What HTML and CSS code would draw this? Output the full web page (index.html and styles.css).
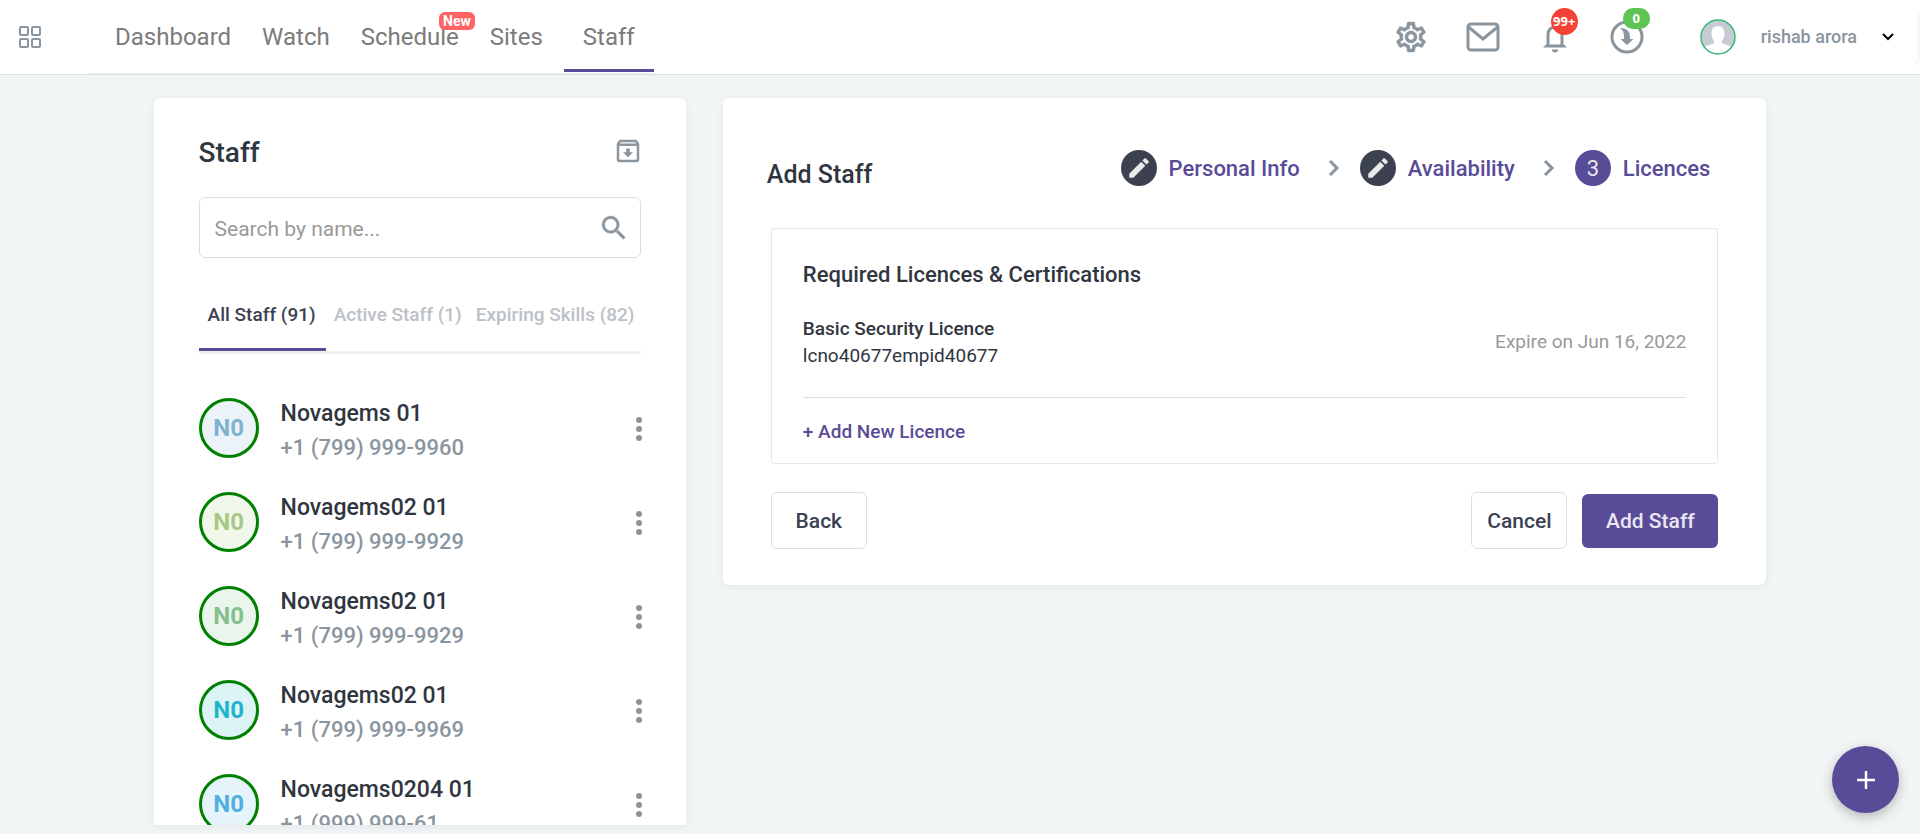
FILE: index.html
```html
<!DOCTYPE html>
<html lang="en">
<head>
<meta charset="utf-8">
<title>Staff</title>
<link rel="stylesheet" href="styles.css">
</head>
<body>
<header class="topbar">
  <button class="icon-btn apps" aria-label="Apps"><svg width="22" height="22" viewBox="0 0 22 22" fill="none" stroke="#8a959e" stroke-width="2"><rect x="1" y="1" width="8" height="8" rx="1"/><rect x="13" y="1" width="8" height="8" rx="1"/><rect x="1" y="13" width="8" height="8" rx="1"/><rect x="13" y="13" width="8" height="8" rx="1"/></svg></button>
  <nav class="nav">
    <a href="#">Dashboard</a>
    <a href="#">Watch</a>
    <a href="#">Schedule<span class="new">New</span></a>
    <a href="#">Sites</a>
    <a href="#" class="current">Staff</a>
  </nav>
  <div class="tools">
    <button class="icon-btn" aria-label="Settings"><svg width="36" height="36" viewBox="0 0 24 24" fill="#8a959e" stroke="#8a959e" stroke-width=".3"><path d="M19.43 12.98c.04-.32.07-.64.07-.98s-.03-.66-.07-.98l2.11-1.65c.19-.15.24-.42.12-.64l-2-3.46c-.09-.16-.26-.25-.44-.25-.06 0-.12.01-.17.03l-2.49 1c-.52-.4-1.08-.73-1.69-.98l-.38-2.65C14.46 2.18 14.25 2 14 2h-4c-.25 0-.46.18-.49.42l-.38 2.65c-.61.25-1.17.59-1.69.98l-2.49-1c-.06-.02-.12-.03-.18-.03-.17 0-.34.09-.43.25l-2 3.46c-.13.22-.07.49.12.64l2.11 1.65c-.04.32-.07.65-.07.98s.03.66.07.98l-2.11 1.65c-.19.15-.24.42-.12.64l2 3.46c.09.16.26.25.44.25.06 0 .12-.01.17-.03l2.49-1c.52.4 1.08.73 1.69.98l.38 2.65c.03.24.24.42.49.42h4c.25 0 .46-.18.49-.42l.38-2.65c.61-.25 1.17-.59 1.69-.98l2.49 1c.06.02.12.03.18.03.17 0 .34-.09.43-.25l2-3.46c.12-.22.07-.49-.12-.64l-2.11-1.65zm-1.98-1.71c.04.31.05.52.05.73s-.02.43-.05.73l-.14 1.13.89.7 1.08.84-.7 1.21-1.27-.51-1.04-.42-.9.68c-.43.32-.84.56-1.25.73l-1.06.43-.16 1.13-.2 1.35h-1.4l-.19-1.35-.16-1.13-1.06-.43c-.43-.18-.83-.41-1.23-.71l-.91-.7-1.06.43-1.27.51-.7-1.21 1.08-.84.89-.7-.14-1.13c-.03-.31-.05-.54-.05-.74s.02-.43.05-.73l.14-1.13-.89-.7-1.08-.84.7-1.21 1.27.51 1.04.42.9-.68c.43-.32.84-.56 1.25-.73l1.06-.43.16-1.13.2-1.35h1.39l.19 1.35.16 1.13 1.06.43c.43.18.83.41 1.23.71l.91.7 1.06-.43 1.27-.51.7 1.21-1.07.85-.89.7.14 1.13zM12 8c-2.21 0-4 1.79-4 4s1.79 4 4 4 4-1.79 4-4-1.79-4-4-4zm0 6c-1.1 0-2-.9-2-2s.9-2 2-2 2 .9 2 2-.9 2-2 2z"/></svg></button>
    <button class="icon-btn" aria-label="Messages"><svg width="36" height="36" viewBox="0 0 36 36" fill="none" stroke="#8a959e" stroke-width="3"><rect x="3" y="5" width="30" height="26" rx="3"/><path d="M3.500 8 18 20 32.500 8"/></svg></button>
    <button class="icon-btn" aria-label="Notifications"><svg width="36" height="36" viewBox="0 0 36 36"><path d="M11 27V15a7 7 0 0 1 14 0v12" fill="none" stroke="#8a959e" stroke-width="3"/><path d="M6 28.500l3-3h18l3 3zM15 30.500h6a3 3 0 0 1-6 0z" fill="#8a959e"/></svg><span class="badge red">99+</span></button>
    <button class="icon-btn" aria-label="Downloads"><svg width="36" height="36" viewBox="0 0 36 36"><circle cx="18" cy="18" r="15" fill="none" stroke="#8a959e" stroke-width="3"/><path d="M11 9c6 0 10 3 10 9v2h3.500L18 26l-6.500-6H15v-2c0-4-1-7-4-9z" fill="#8a959e"/></svg><span class="badge green">0</span></button>
  </div>
  <button class="user"><svg width="36" height="36" viewBox="0 0 36 36"><circle cx="18" cy="18" r="17" fill="#c6cad2"/><path d="M18 7c-4 0-6.500 3-6.500 7 0 3 1 6 2.500 8v2c-3 2-7 2-9.500 4a17 17 0 0 0 27 0c-2.500-2-6.500-2-9.500-4v-2c1.500-2 2.500-5 2.500-8 0-4-2.500-7-6.500-7z" fill="#fff"/><circle cx="18" cy="18" r="17" fill="none" stroke="#3cb878" stroke-width="1.500"/></svg><span>rishab arora</span><svg width="12" height="8" viewBox="0 0 12 8" fill="none" stroke="#000" stroke-width="2"><path d="M1 1l5 5 5-5"/></svg></button>
</header>
<main class="page">
  <section class="card staff">
    <div class="staff-head"><h1>Staff</h1><button class="icon-btn archive" aria-label="Archive"><svg width="30" height="30" viewBox="0 0 24 24" fill="#8a959e"><path d="M20.540 5.230l-1.390-1.680C18.880 3.210 18.470 3 18 3H6c-.47 0-.88.21-1.160.55L3.460 5.230C3.170 5.570 3 6.020 3 6.500V19c0 1.100.9 2 2 2h14c1.100 0 2-.9 2-2V6.500c0-.48-.17-.93-.46-1.270zM6.240 5h11.520l.83 1H5.420l.82-1zM5 19V8h14v11H5zm8.450-9h-2.900v3H8l4 4 4-4h-2.550z"/></svg></button></div>
    <div class="search"><input type="text" placeholder="Search by name..." aria-label="Search by name"><svg width="32" height="32" viewBox="0 0 24 24" fill="#8a959e" stroke="#8a959e" stroke-width=".3"><path d="M15.500 14h-.79l-.28-.27A6.470 6.470 0 0 0 16 9.500 6.500 6.500 0 1 0 9.500 16c1.610 0 3.090-.59 4.230-1.570l.27.28v.79l5 4.990L20.490 19l-4.990-5zm-6 0C7.010 14 5 11.990 5 9.500S7.010 5 9.500 5 14 7.010 14 9.500 11.990 14 9.500 14z"/></svg></div>
    <div class="tabs"><button class="tab on">All Staff (91)</button><button class="tab">Active Staff (1)</button><button class="tab">Expiring Skills (82)</button></div>
    <ul class="list">
      <li><span class="avatar a1">N0</span><div class="who"><strong>Novagems 01</strong><span>+1 (799) 999-9960</span></div><button class="more" aria-label="More"><i></i><i></i><i></i></button></li>
      <li><span class="avatar a2">N0</span><div class="who"><strong>Novagems02 01</strong><span>+1 (799) 999-9929</span></div><button class="more" aria-label="More"><i></i><i></i><i></i></button></li>
      <li><span class="avatar a3">N0</span><div class="who"><strong>Novagems02 01</strong><span>+1 (799) 999-9929</span></div><button class="more" aria-label="More"><i></i><i></i><i></i></button></li>
      <li><span class="avatar a4">N0</span><div class="who"><strong>Novagems02 01</strong><span>+1 (799) 999-9969</span></div><button class="more" aria-label="More"><i></i><i></i><i></i></button></li>
      <li><span class="avatar a5">N0</span><div class="who"><strong>Novagems0204 01</strong><span>+1 (999) 999-61</span></div><button class="more" aria-label="More"><i></i><i></i><i></i></button></li>
    </ul>
  </section>
  <section class="card add">
    <div class="add-head">
      <h2>Add Staff</h2>
      <ol class="steps">
        <li><span class="dot"><svg width="26" height="26" viewBox="0 0 24 24" fill="#e9e9ea"><path d="M3 17.250V21h3.750L17.810 9.940l-3.750-3.750L3 17.250zM20.710 7.040a1 1 0 0 0 0-1.410l-2.340-2.340a1 1 0 0 0-1.410 0l-1.830 1.830 3.750 3.750 1.830-1.830z"/></svg></span>Personal Info</li>
        <li class="sep"><svg width="12" height="18" viewBox="0 0 12 18" fill="none" stroke="#8a959e" stroke-width="3"><path d="M2 2l7 7-7 7"/></svg></li>
        <li><span class="dot"><svg width="26" height="26" viewBox="0 0 24 24" fill="#e9e9ea"><path d="M3 17.250V21h3.750L17.810 9.940l-3.750-3.750L3 17.250zM20.710 7.040a1 1 0 0 0 0-1.410l-2.340-2.340a1 1 0 0 0-1.410 0l-1.830 1.830 3.750 3.750 1.830-1.830z"/></svg></span>Availability</li>
        <li class="sep"><svg width="12" height="18" viewBox="0 0 12 18" fill="none" stroke="#8a959e" stroke-width="3"><path d="M2 2l7 7-7 7"/></svg></li>
        <li><span class="dot now">3</span>Licences</li>
      </ol>
    </div>
    <div class="box">
      <h3>Required Licences &amp; Certifications</h3>
      <div class="licence"><div><strong>Basic Security Licence</strong><span>lcno40677empid40677</span></div><time datetime="2022-06-16">Expire on Jun 16, 2022</time></div>
      <button class="link">+ Add New Licence</button>
    </div>
    <div class="actions"><button class="btn">Back</button><button class="btn cancel">Cancel</button><button class="btn primary">Add Staff</button></div>
  </section>
</main>
<button class="fab" aria-label="Add"><svg width="20" height="20" viewBox="0 0 20 20" stroke="#fff" stroke-width="2.500"><path d="M10 1v18M1 10h18"/></svg></button>
</body>
</html>
```
FILE: styles.css
```css
* { box-sizing: border-box; }
body { margin: 0; height: 100vh; overflow: hidden; display: flex; flex-direction: column; background: #f1f5f6; color: #2f3640; font-family: Roboto, "Liberation Sans", sans-serif; font-size: 19px; }
button { font: inherit; color: inherit; background: none; border: 0; padding: 0; margin: 0; cursor: pointer; }
svg { display: block; }
h1, h2, h3, ul, ol { margin: 0; padding: 0; font-weight: 500; list-style: none; }
.topbar { flex: none; height: 75px; display: flex; align-items: stretch; background: #fff; border-bottom: 1px solid #e0e0e0; padding-left: 19px; }
.icon-btn { position: relative; }
.nav { display: flex; margin-left: 45px; padding-left: 14px; border-bottom: 1px solid #f1f1f1; font-size: 24px; color: #7b7b7b; }
.nav a { position: relative; display: flex; align-items: center; padding: 1px 16px 0 15px; color: inherit; text-decoration: none; }
.nav a.current { margin-left: 5px; padding: 5px 19px 0; border-bottom: 3px solid #5a4b98; margin-bottom: 1px; }
.new { position: absolute; top: 12px; right: 0; height: 18px; padding: 0 4px; border-radius: 6px; background: #ff6363; color: #fff; font-size: 14px; font-weight: 700; line-height: 18px; }
.tools { display: flex; gap: 36px; margin-left: auto; }
.tools .icon-btn { width: 36px; }
.badge { position: absolute; top: 8px; left: 14px; width: 27px; color: #fff; font: 700 13px/27px "Open Sans", sans-serif; text-align: center; }
.red { height: 27px; border-radius: 50%; background: #f44336; }
.green { height: 21px; border-radius: 10px; background: #5fc453; line-height: 21px; }
.user { display: flex; align-items: center; gap: 25px; margin: 9px 3px 9px 55px; padding-right: 23px; border-radius: 6px; box-shadow: 3px 0 0 #f8f8f8; color: #8a959e; font-size: 18px; font-weight: 500; }
.user span { padding-bottom: 2px; }
.page { flex: 1; min-height: 0; display: flex; align-items: flex-start; gap: 37px; padding: 23px 8% 9px; }
.card { background: #fff; border-radius: 6px; box-shadow: 0 2px 8px rgba(0, 0, 0, .06); }
.staff { width: 33%; height: 100%; overflow: hidden; padding: 36px 45px 0; border-radius: 6px 6px 0 0; }
.staff-head { display: flex; justify-content: space-between; align-items: center; height: 36px; }
.archive { margin-right: -2px; padding-bottom: 2px; }
h1 { font-size: 28px; }
.search { display: flex; align-items: center; height: 61px; margin-top: 27px; padding: 0 10px 0 15px; border: 1px solid #dedede; border-radius: 6px; }
.search input { flex: 1; min-width: 0; border: 0; outline: 0; padding: 3px 0 0; font: 21px Roboto, sans-serif; }
.search input::placeholder { color: #999; opacity: 1; }
.tabs { display: flex; margin-top: 25px; height: 71px; border-bottom: 3px solid #f1f1f1; font-weight: 500; white-space: nowrap; }
.tab { color: #bcc1c7; padding: 0 6px 6px 8px; }
.tab.on { color: #3c4152; padding: 3px 10px 6px 9px; border-bottom: 3px solid #5a4b98; }
.list { padding-top: 44px; }
.list li { display: flex; align-items: center; height: 60px; margin-bottom: 34px; }
.avatar { flex: none; display: grid; place-items: center; width: 60px; height: 60px; border: 3px solid #008000; border-radius: 50%; font-size: 24px; font-weight: 700; }
.a1 { background: #ebf3f8; color: #7fb2d0; }
.a2 { background: #f2f7ec; color: #a8c984; }
.a3 { background: #eaf5ec; color: #82c08c; }
.a4 { background: #dcf4f6; color: #1fb6cb; }
.a5 { background: #e5f3fb; color: #50aee0; }
.who { flex: 1; display: flex; flex-direction: column; margin-left: 22px; padding-top: 5px; line-height: 34px; font-size: 22px; color: #8a959e; }
.who strong { font-size: 23px; font-weight: 500; color: #2f3640; }
.more { display: grid; gap: 3px; margin-right: -1px; padding-top: 2px; }
.more i { width: 6px; height: 6px; border-radius: 50%; background: #8a959e; }
.add { flex: 1; padding: 52px 48px 36px; }
.add-head { display: flex; justify-content: space-between; align-items: flex-start; height: 78px; }
h2 { font-size: 25px; line-height: 50px; margin-left: -4px; }
.steps { display: flex; align-items: center; padding-right: 8px; color: #5a4b98; font-size: 22px; font-weight: 500; }
.steps li { display: flex; align-items: center; gap: 12px; }
.steps .sep { padding: 0 20px 0 28px; }
.dot { display: grid; place-items: center; width: 36px; height: 36px; border-radius: 50%; background: #3c4152; }
.now { background: #5a4b98; color: #e9e9ea; font-weight: 400; }
.box { height: 236px; padding: 30px 31px 0; border: 1px solid #e6e6e6; border-radius: 3px; }
h3 { font-size: 22px; line-height: 32px; }
.licence { display: flex; justify-content: space-between; height: 107px; padding-top: 24px; border-bottom: 1px solid #dedede; line-height: 27px; }
.licence div { display: flex; flex-direction: column; }
.licence strong { font-weight: 500; }
.licence time { color: #999; line-height: 54px; }
.link { margin-top: 22px; color: #5a4b98; font-weight: 500; }
.actions { display: flex; align-items: center; gap: 15px; margin-top: 28px; font-weight: 500; font-size: 21px; color: #3c4152; }
.btn { width: 96px; height: 57px; border: 1px solid #dedede; border-radius: 6px; }
.cancel { margin-left: auto; }
.primary { width: 136px; height: 54px; border: 0; background: #5a4b98; color: #e9e6f2; }
.fab { position: fixed; right: 21px; bottom: 21px; display: grid; place-items: center; width: 67px; height: 67px; border-radius: 50%; background: #5a4b98; box-shadow: 0 4px 12px rgba(0, 0, 0, .25); }
```
